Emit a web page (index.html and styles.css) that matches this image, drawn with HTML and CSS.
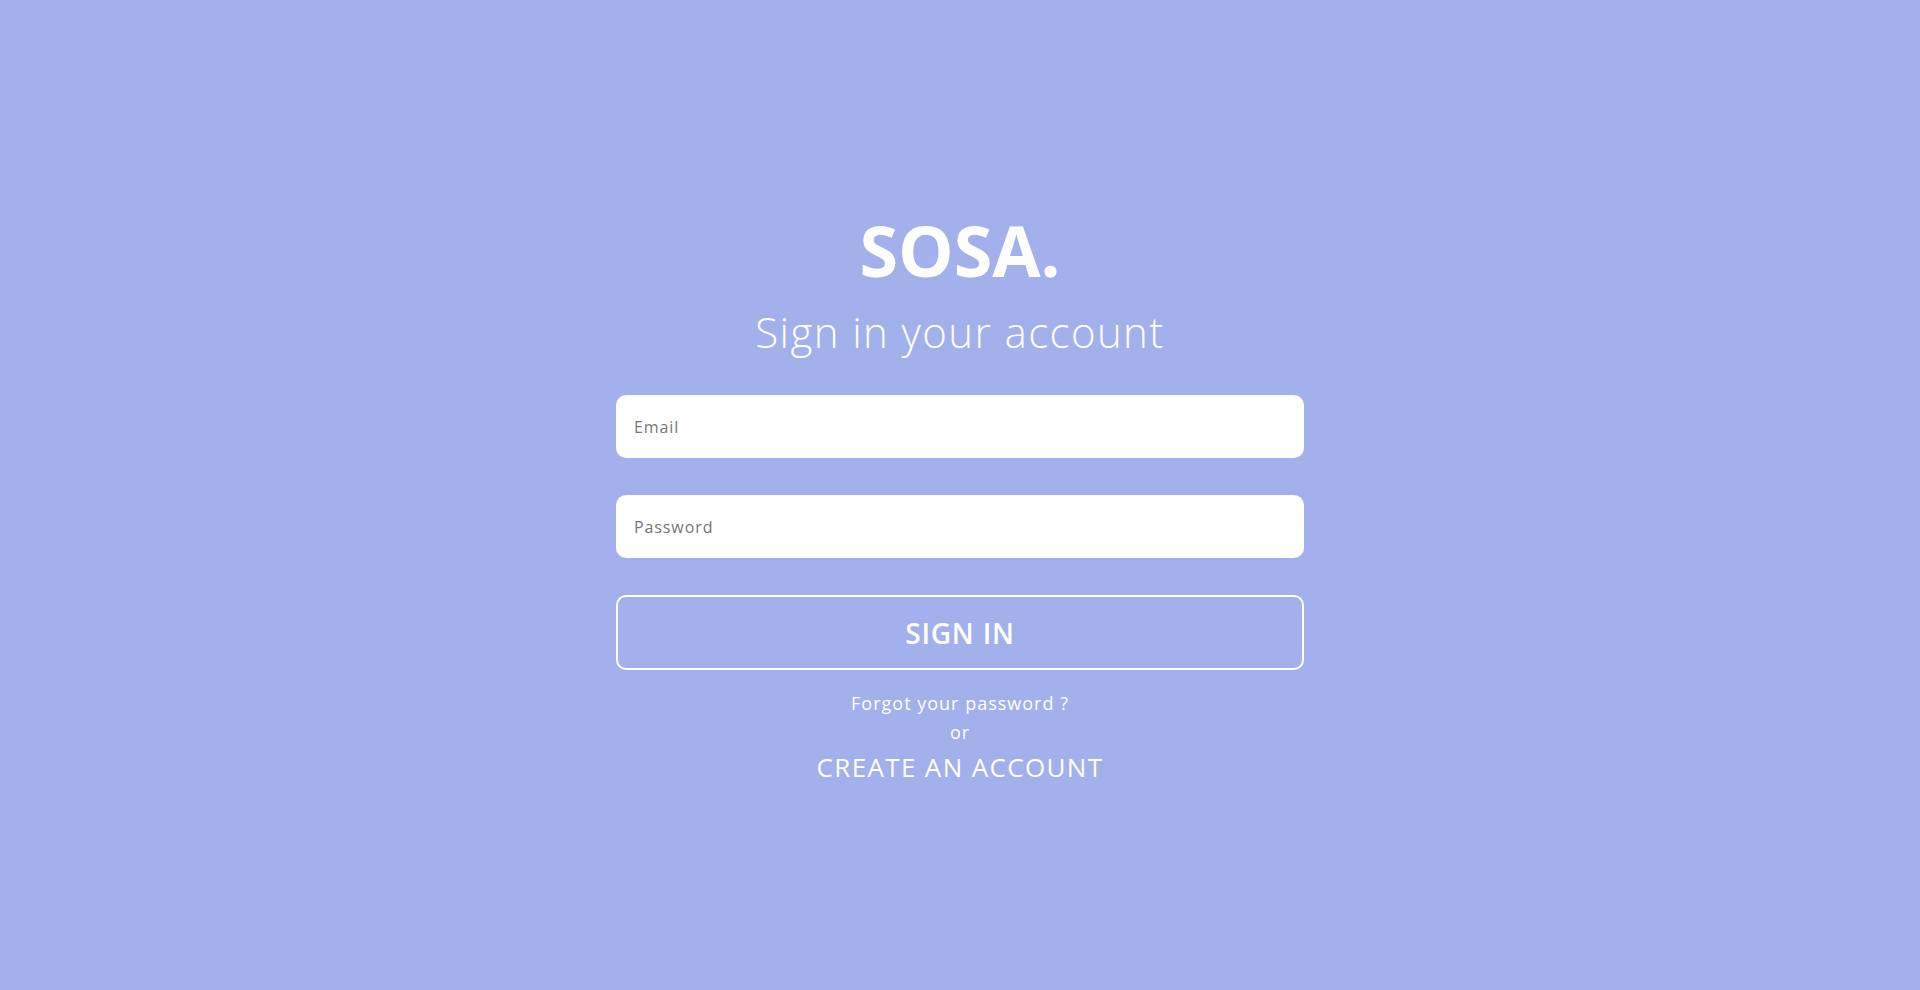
FILE: index.html
```html
<!DOCTYPE html>
<html lang="en">
<head>
<meta charset="utf-8">
<title>SOSA. - Sign in</title>
<link rel="stylesheet" href="styles.css">
</head>
<body>
<main class="page">
  <form class="login">
    <h1 class="brand">SOSA.</h1>
    <h2 class="subtitle">Sign in your account</h2>
    <input class="field field-email" type="email" placeholder="Email">
    <input class="field field-password" type="password" placeholder="Password">
    <button class="submit" type="button">SIGN IN</button>
    <a class="forgot" href="#">Forgot your password ?</a>
    <span class="or">or</span>
    <a class="create" href="#">CREATE AN ACCOUNT</a>
  </form>
</main>
</body>
</html>
```

FILE: styles.css
```css
* {
  box-sizing: border-box;
}

html, body {
  margin: 0;
  padding: 0;
}

body {
  background: #a2b0eb;
  font-family: "Open Sans", "Liberation Sans", sans-serif;
  color: #ffffff;
  min-height: 100vh;
}

.page {
  display: flex;
  justify-content: center;
  padding-top: 215px;
}

.login {
  width: 688px;
  display: flex;
  flex-direction: column;
  align-items: center;
}

.brand {
  margin: 0;
  font-size: 70px;
  line-height: 70px;
  font-weight: 700;
  letter-spacing: 0;
}

.subtitle {
  margin: 26px 0 0;
  font-size: 42px;
  line-height: 42px;
  font-weight: 300;
  letter-spacing: 1.4px;
}

.field {
  width: 100%;
  height: 63px;
  border: none;
  border-radius: 10px;
  background: #ffffff;
  padding: 0 18px;
  font-family: inherit;
  font-size: 16px;
  letter-spacing: 0.9px;
  color: #333333;
  outline: none;
}

.field::placeholder {
  color: #757575;
}

.field-email {
  margin-top: 42px;
}

.field-password {
  margin-top: 37px;
}

.submit {
  margin-top: 37px;
  width: 100%;
  height: 75px;
  border: 2px solid #ffffff;
  border-radius: 10px;
  background: transparent;
  color: #ffffff;
  font-family: inherit;
  font-size: 28px;
  font-weight: 600;
  letter-spacing: 0.8px;
  display: flex;
  align-items: center;
  justify-content: center;
  cursor: pointer;
}

.forgot {
  margin-top: 19px;
  font-size: 18px;
  line-height: 29px;
  letter-spacing: 1px;
  color: #ffffff;
  text-decoration: none;
}

.or {
  font-size: 18px;
  line-height: 29px;
  letter-spacing: 1px;
}

.create {
  margin-top: 2px;
  font-size: 26px;
  line-height: 36px;
  letter-spacing: 1.35px;
  color: #ffffff;
  text-decoration: none;
}
```
